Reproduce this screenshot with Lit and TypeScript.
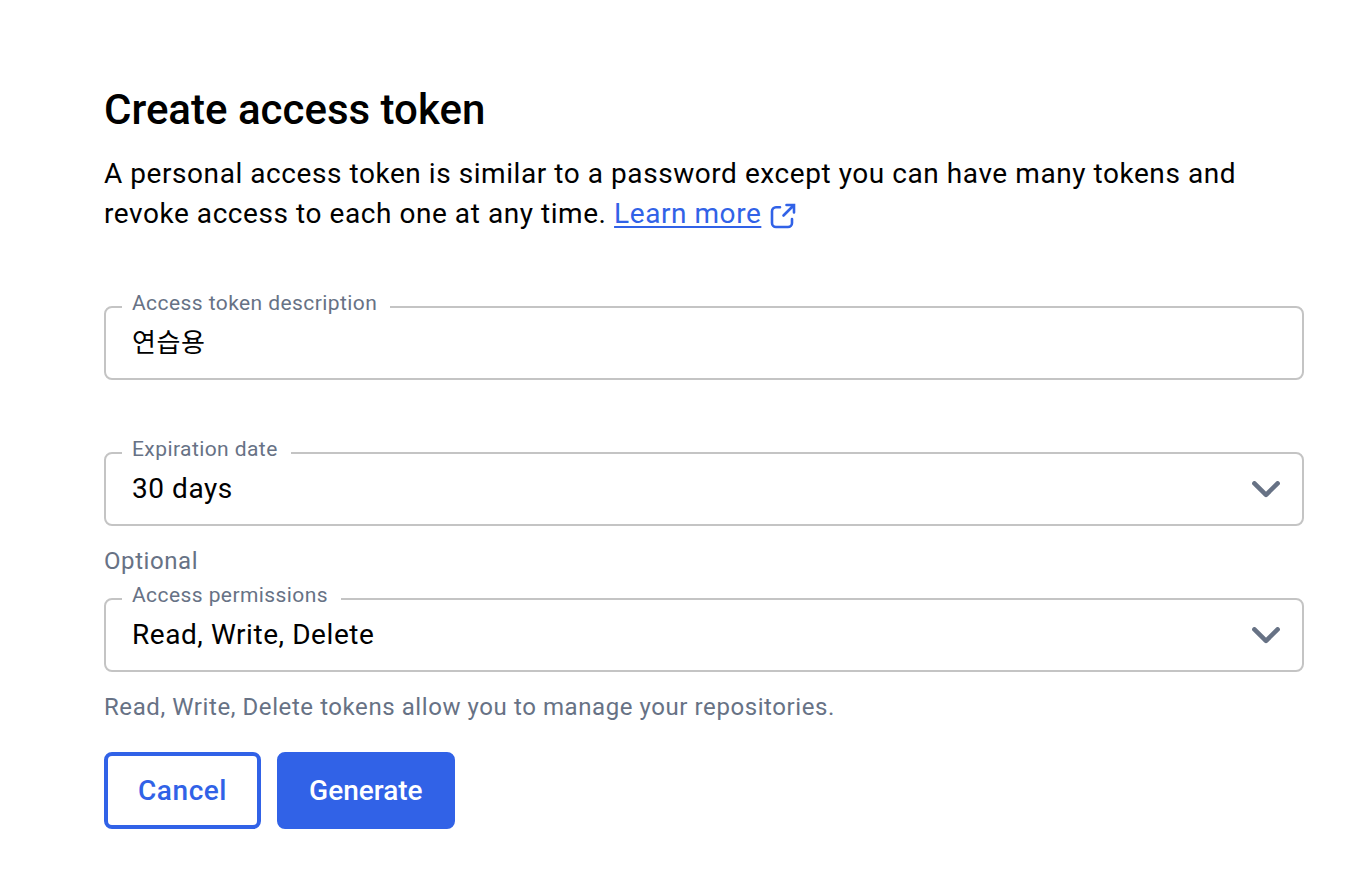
import { LitElement, html, css } from "lit";
import { customElement } from "lit/decorators.js";

@customElement("app-root")
export class AppRoot extends LitElement {
  static styles = css`
    :host {
      display: block;
      padding: 84px 64px 48px 104px;
      font-family: Roboto, "Noto Sans CJK KR", sans-serif;
      font-size: 28px;
      color: #000;
      background: #fff;
    }
    * { box-sizing: border-box; }
    h1 { margin: 0; font-size: 42px; line-height: 52px; font-weight: 500; }
    .intro { margin: 18px 0 0; line-height: 40px; letter-spacing: 0.02em; }
    .link { color: #3162e7; text-decoration: underline; text-decoration-thickness: 2px; text-underline-offset: 3px; }
    .external { display: inline-block; vertical-align: -6px; margin-left: 9px; }
    .external svg { display: block; }
    form { margin-top: 57px; }
    .field {
      position: relative;
      display: block;
      margin: 0;
      padding: 0 12px 0 16px;
      height: 89px;
      border: 2px solid #c4c4c4;
      border-radius: 8px;
    }
    .field + .field { margin-top: 57px; }
    legend {
      padding: 0 13px 8px 10px;
      font-size: 21px;
      line-height: 24px;
      letter-spacing: 0.02em;
      color: #677285;
    }
    .control {
      display: block;
      width: 100%;
      height: 38px;
      padding: 0 10px;
      border: 0;
      outline: 0;
      background: transparent;
      appearance: none;
      font: inherit;
      letter-spacing: 0.02em;
      color: #000;
    }
    .text { height: 34px; font-size: 26px; }
    .chevron { position: absolute; right: 22px; top: 12px; pointer-events: none; }
    .help { margin: 19px 0 6px; font-size: 24px; line-height: 32px; letter-spacing: 0.024em; color: #677285; }
    .actions { display: flex; gap: 16px; margin-top: 29px; }
    button {
      height: 77px;
      padding: 0 30px;
      border: 4px solid #3162e7;
      border-radius: 8px;
      background: #fff;
      color: #3162e7;
      font: inherit;
      font-weight: 500;
      letter-spacing: 0.02em;
    }
    .primary { padding: 0 28px; background: #3162e7; color: #fff; letter-spacing: normal; }
  `;

  private chevron() {
    return html`<svg class="chevron" width="28" height="17" viewBox="0 0 28 17" aria-hidden="true">
      <path d="M2.4 2.4 14 13.8 25.6 2.4" fill="none" stroke="#677285" stroke-width="4.6" stroke-linecap="round" stroke-linejoin="round" />
    </svg>`;
  }

  render() {
    return html`
      <h1>Create access token</h1>
      <p class="intro">
        A personal access token is similar to a password except you can have many tokens and revoke access to each one at any time.
        <a class="link" href="#">Learn more</a><span class="external"><svg width="26" height="26" viewBox="0 0 26 26" fill="none" stroke="#3162e7" stroke-width="2.6" stroke-linecap="round" aria-hidden="true"><path d="M10 4.2H6A4 4 0 0 0 2 8.200V20a4 4 0 0 0 4 4h12a4 4 0 0 0 4-4v-4M16.500 2H24v7.500M23.500 2.500 13.500 12.500" /></svg></span>
      </p>
      <form>
        <fieldset class="field">
          <legend><label for="description">Access token description</label></legend>
          <input class="control text" id="description" type="text" .value=${"연습용"} />
        </fieldset>
        <fieldset class="field">
          <legend><label for="expiration">Expiration date</label></legend>
          <select class="control" id="expiration"><option>30 days</option></select>
          ${this.chevron()}
        </fieldset>
        <p class="help">Optional</p>
        <fieldset class="field">
          <legend><label for="permissions">Access permissions</label></legend>
          <select class="control" id="permissions"><option>Read, Write, Delete</option></select>
          ${this.chevron()}
        </fieldset>
        <p class="help">Read, Write, Delete tokens allow you to manage your repositories.</p>
        <div class="actions">
          <button type="button">Cancel</button>
          <button class="primary" type="button">Generate</button>
        </div>
      </form>
    `;
  }
}
